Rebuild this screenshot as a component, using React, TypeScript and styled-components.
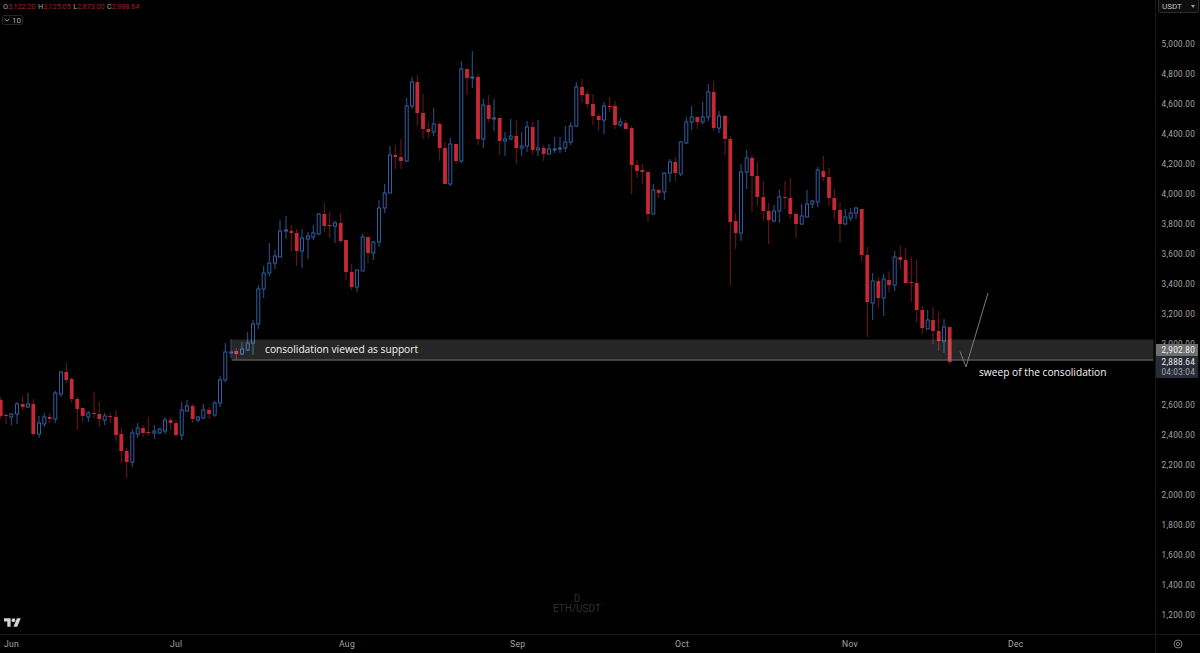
import React from 'react';
import styled, { createGlobalStyle } from 'styled-components';

// [x, high, bodyTop, bodyBottom, low, up?]  all in screen px
type Bar = [number, number, number, number, number, number];

const bars: Bar[] = [
  [0.7, 397, 400, 416, 419, 0], [6, 413, 415, 416, 424, 0], [11.3, 413, 414, 417, 425, 1], [17, 402, 404, 414, 424, 1],
  [22.7, 396, 404, 407, 410, 0], [28, 393, 404, 407, 408, 1], [33.3, 399, 404, 434, 436, 0], [39, 416, 423, 434, 438, 1],
  [44.3, 413, 417, 424, 427, 1], [49.7, 413, 417, 419, 423, 0], [55.3, 391, 393, 419, 423, 1], [61, 371, 372, 394, 397, 1],
  [66.3, 363, 372, 380, 383, 0], [71.7, 377, 379, 399, 403, 0], [77.3, 397, 399, 409, 430, 0], [82.7, 408, 408, 416, 422, 0],
  [88.3, 411, 413, 417, 422, 1], [94, 392, 413, 414, 418, 0], [99.3, 402, 414, 419, 427, 0], [104.7, 413, 416, 420, 425, 1],
  [110.3, 413, 416, 417, 423, 0], [116, 410, 417, 435, 441, 0], [121.3, 428, 434, 451, 463, 0], [126.7, 448, 451, 462, 478, 0],
  [132.3, 429, 433, 462, 467, 1], [137.7, 423, 428, 434, 438, 1], [143, 425, 428, 433, 437, 0], [148.3, 417, 432, 433, 436, 0],
  [154.3, 425, 431, 433, 439, 1], [159.7, 428, 429, 433, 434, 1], [165, 417, 420, 431, 434, 1], [170.7, 417, 420, 423, 430, 0],
  [176, 420, 423, 435, 437, 0], [181.7, 402, 410, 435, 440, 1], [187, 400, 406, 411, 412, 1], [192.7, 404, 406, 419, 423, 0],
  [198, 416, 417, 420, 422, 1], [203.3, 404, 410, 418, 419, 1], [209, 407, 410, 414, 419, 0], [214.7, 401, 403, 415, 417, 1],
  [220, 376, 380, 403, 407, 1], [225.3, 343, 352, 380, 382, 1], [231, 339, 352, 353, 358, 1], [236.3, 348, 351, 354, 360, 0],
  [242, 342, 349, 354, 355, 1], [247.7, 332, 343, 350, 351, 1], [253, 320, 324, 343, 355, 1], [258.3, 285, 289, 324, 329, 1],
  [263.7, 266, 273, 289, 298, 1], [269.3, 243, 263, 273, 276, 1], [275, 250, 256, 263, 269, 1], [280, 220, 231, 257, 257, 1],
  [286, 216, 230, 231, 239, 1], [291.3, 225, 231, 233, 252, 0], [296.7, 229, 233, 251, 266, 0], [302, 229, 238, 251, 268, 1],
  [308, 232, 236, 239, 259, 1], [313.3, 225, 233, 237, 240, 1], [318.7, 213, 214, 234, 235, 1], [324.3, 203, 214, 226, 232, 0],
  [329.7, 212, 225, 226, 238, 0], [335, 221, 223, 226, 243, 1], [340.7, 213, 223, 241, 243, 0], [346, 240, 240, 272, 280, 0],
  [351.7, 264, 272, 287, 290, 0], [357, 270, 270, 287, 292, 1], [362.7, 234, 237, 271, 271, 1], [368, 237, 237, 253, 263, 0],
  [373.3, 241, 242, 253, 260, 1], [379, 200, 208, 242, 247, 1], [384.7, 184, 193, 208, 213, 1], [390, 146, 155, 193, 193, 1],
  [395.3, 145, 155, 157, 169, 0], [401, 139, 157, 161, 169, 0], [406.7, 98, 106, 161, 162, 1], [412, 77, 82, 106, 109, 1],
  [417.3, 75, 82, 113, 126, 0], [423, 94, 113, 129, 139, 0], [428.3, 122, 129, 132, 138, 0], [433.7, 108, 124, 132, 136, 1],
  [439.7, 122, 124, 148, 161, 0], [445, 142, 148, 184, 184, 0], [450.3, 138, 144, 184, 186, 1], [456, 144, 144, 161, 164, 0],
  [461.3, 61, 69, 161, 163, 1], [467, 69, 69, 78, 95, 0], [472.3, 51, 77, 78, 88, 1], [478, 74, 77, 139, 145, 0],
  [483.3, 99, 105, 139, 148, 1], [488.7, 95, 105, 119, 122, 0], [494, 99, 118, 119, 131, 1], [499.7, 118, 118, 141, 155, 0],
  [505, 132, 139, 141, 156, 1], [510.7, 119, 136, 139, 140, 1], [516.3, 120, 136, 148, 164, 0], [521.7, 132, 146, 148, 156, 1],
  [527, 121, 127, 146, 152, 1], [532.7, 122, 127, 150, 155, 0], [538, 120, 148, 150, 156, 1], [543.7, 145, 148, 154, 161, 0],
  [549, 144, 149, 154, 154, 1], [554.7, 137, 149, 149, 153, 1], [560, 137, 148, 149, 153, 1], [565.3, 126, 142, 148, 152, 1],
  [570.7, 122, 126, 142, 145, 1], [576.3, 82, 87, 126, 127, 1], [582, 79, 87, 95, 103, 0], [587.3, 91, 94, 104, 108, 0],
  [593, 94, 104, 116, 125, 0], [598.7, 114, 116, 120, 131, 0], [604, 102, 106, 120, 134, 1], [609.7, 97, 106, 107, 112, 0],
  [615, 101, 106, 125, 129, 0], [620.3, 118, 122, 125, 127, 1], [625.7, 120, 123, 129, 129, 0], [631.7, 126, 128, 165, 194, 0],
  [637, 160, 165, 171, 178, 0], [642.3, 164, 170, 172, 184, 0], [648, 171, 172, 214, 222, 0], [653.3, 184, 190, 214, 214, 1],
  [658.7, 189, 190, 193, 198, 0], [664.3, 172, 173, 192, 200, 1], [670, 159, 162, 173, 182, 1], [675.3, 157, 162, 173, 181, 0],
  [680.7, 141, 142, 174, 176, 1], [686.3, 117, 122, 143, 144, 1], [691.7, 106, 117, 122, 130, 1], [697.3, 117, 117, 122, 129, 0],
  [702.7, 102, 117, 122, 124, 1], [708.3, 84, 92, 117, 121, 1], [713.7, 81, 92, 128, 131, 0], [719, 111, 116, 128, 133, 1],
  [725, 115, 116, 139, 155, 0], [730.3, 136, 139, 222, 285, 0], [735.7, 213, 221, 233, 249, 0], [741, 164, 172, 233, 241, 1],
  [746.7, 150, 158, 172, 189, 1], [752, 155, 158, 176, 212, 0], [757.3, 162, 176, 197, 206, 0], [763.3, 181, 197, 211, 221, 0],
  [768.7, 203, 211, 220, 244, 0], [774, 205, 211, 221, 222, 1], [779.3, 190, 197, 211, 223, 1], [785, 181, 197, 198, 209, 0],
  [790.3, 178, 198, 214, 219, 0], [796, 212, 214, 224, 238, 0], [801.7, 204, 216, 224, 225, 1], [807, 190, 204, 217, 217, 1],
  [812.3, 200, 201, 204, 208, 1], [817.7, 167, 170, 202, 207, 1], [823.3, 156, 171, 177, 181, 0], [829, 168, 177, 198, 206, 0],
  [834.3, 189, 198, 210, 219, 0], [840, 202, 210, 224, 243, 0], [845.3, 209, 217, 224, 225, 1], [850.7, 208, 213, 218, 221, 1],
  [856, 207, 208, 213, 219, 1], [861.7, 209, 209, 255, 261, 0], [867.3, 247, 255, 302, 337, 0], [872.7, 273, 281, 303, 320, 1],
  [878.3, 277, 281, 298, 308, 0], [883.7, 274, 279, 298, 316, 1], [889, 271, 280, 285, 292, 0], [894.7, 251, 257, 285, 291, 1],
  [900.3, 246, 257, 260, 269, 0], [905.7, 248, 260, 283, 283, 0], [911.3, 257, 282, 283, 302, 0], [916.7, 260, 283, 310, 322, 0],
  [922.3, 306, 310, 328, 334, 0], [927.7, 310, 320, 329, 329, 1], [933, 307, 320, 331, 344, 0], [938.7, 311, 331, 341, 351, 0],
  [944, 319, 327, 341, 353, 1], [949.7, 327, 327, 362, 364, 0],
];

// 2,800 sits behind the last price tag, so its row stays empty
const prices = [
  '5,000.00', '4,800.00', '4,600.00', '4,400.00', '4,200.00', '4,000.00', '3,800.00', '3,600.00', '3,400.00', '3,200.00',
  '3,000.00', '', '2,600.00', '2,400.00', '2,200.00', '2,000.00', '1,800.00', '1,600.00', '1,400.00', '1,200.00',
];

const months = ['Jun', 'Jul', 'Aug', 'Sep', 'Oct', 'Nov', 'Dec'];

const legend = [
  ['O', '3,122.20'],
  ['H', '3,125.05'],
  ['L', '2,873.00'],
  ['C', '2,888.64'],
];

const GlobalStyle = createGlobalStyle`
  html, body {
    margin: 0;
    height: 100%;
    background: #000;
    overflow: hidden;
  }
  #root {
    height: 100%;
  }
`;

const Layout = styled.div`
  width: 1200px;
  height: 653px;
  display: grid;
  grid-template-columns: 1155px 45px;
  grid-template-rows: 634px 19px;
  background: #000;
  font-family: Roboto, "Liberation Sans", sans-serif;
`;

const ChartPane = styled.div`
  position: relative;
  overflow: hidden;
`;

const ChartSvg = styled.svg`
  display: block;
`;

const TopLeftOverlay = styled.div`
  position: absolute;
  left: 2px;
  top: 2px;
  display: flex;
  flex-direction: column;
  align-items: flex-start;
  gap: 3px;
`;

const Legend = styled.div`
  display: flex;
  gap: 2.5px;
  padding-left: 1px;
  font-size: 7.2px;
  line-height: 10px;
`;

const LegendItem = styled.span`
  color: #a8a8a8;
`;

const LegendValue = styled.span`
  color: #a0212a;
`;

const IndicatorChip = styled.div`
  width: 21px;
  height: 10px;
  box-sizing: border-box;
  border: 1px solid #242424;
  border-radius: 2px;
  display: flex;
  align-items: center;
  justify-content: center;
  gap: 2px;
  color: #b0b0b0;
  font-size: 8px;
`;

const Note = styled.span<{ $x: number; $y: number }>`
  position: absolute;
  left: ${(p) => p.$x}px;
  top: ${(p) => p.$y}px;
  color: #f4f4f4;
  font-family: "Open Sans", sans-serif;
  font-size: 10.2px;
  font-weight: 500;
  line-height: 14px;
  white-space: nowrap;
`;

const Watermark = styled.div`
  position: absolute;
  left: 553px;
  top: 594px;
  width: 48px;
  text-align: center;
  color: #303030;
  font-size: 10px;
  line-height: 10px;
  white-space: nowrap;
`;

const Logo = styled.svg`
  position: absolute;
  left: 4px;
  top: 618px;
`;

const PriceAxis = styled.div`
  position: relative;
  border-left: 1px solid #171717;
  padding: 29px 5px 0 0;
  display: flex;
  flex-direction: column;
  align-items: flex-end;
`;

const PriceRow = styled.div`
  height: 30.05px;
  flex-shrink: 0;
  display: flex;
  align-items: center;
  color: #a6a6a6;
  font-size: 8.2px;
  letter-spacing: 0.25px;
`;

const CurrencyButton = styled.div`
  position: absolute;
  left: 2px;
  top: -1px;
  width: 41px;
  height: 14px;
  box-sizing: border-box;
  padding: 0 3px;
  border: 1px solid #2b2b2b;
  border-radius: 2px;
  background: #0d0d0d;
  display: flex;
  align-items: center;
  justify-content: space-between;
  color: #c0c0c0;
  font-size: 8px;
`;

const TagStack = styled.div`
  position: absolute;
  left: 0;
  top: 344px;
  width: 42px;
  display: flex;
  flex-direction: column;
  font-size: 8.2px;
  letter-spacing: 0.25px;
  white-space: nowrap;
`;

const PriceTag = styled.div`
  height: 12px;
  padding-right: 3px;
  background: #6f6f6f;
  color: #f2f2f2;
  display: flex;
  align-items: center;
  justify-content: flex-end;
`;

const LastPriceTag = styled.div`
  height: 22px;
  padding-right: 3px;
  background: #282c38;
  display: flex;
  flex-direction: column;
  align-items: flex-end;
  justify-content: center;
  line-height: 10.5px;
  color: #ececec;
`;

const Countdown = styled.span`
  color: #a4a6ac;
`;

const TimeAxis = styled.div`
  border-top: 1px solid #171717;
  padding-left: 4px;
  display: grid;
  grid-template-columns: 166px 169px 171px 165px 167px 166px 1fr;
  align-items: center;
  color: #a6a6a6;
  font-size: 8.6px;
  letter-spacing: 0.3px;
`;

const AxisCorner = styled.div`
  border-top: 1px solid #171717;
  border-left: 1px solid #171717;
  display: flex;
  align-items: center;
  justify-content: center;
`;

const Candle = ({ bar }: { bar: Bar }) => {
  const [x, high, top, bottom, low, up] = bar;
  if (up) {
    return (
      <g stroke="#2f5fa3">
        <line x1={x} x2={x} y1={high} y2={top} stroke="#2c5894" />
        <line x1={x} x2={x} y1={bottom} y2={low} stroke="#2c5894" />
        <rect x={x - 1.5} y={top} width={3} height={Math.max(bottom - top, 1)} fill="#000" />
      </g>
    );
  }
  return (
    <g>
      <line x1={x} x2={x} y1={high} y2={low} stroke="#74181f" />
      <rect x={x - 1.9} y={top} width={3.8} height={Math.max(bottom - top, 1)} fill="#c52a34" />
    </g>
  );
};

export default function App() {
  return (
    <>
      <GlobalStyle />
      <Layout>
        <ChartPane>
          <ChartSvg width={1155} height={634} viewBox="0 0 1155 634">
            {bars.map((bar) => (
              <Candle key={bar[0]} bar={bar} />
            ))}
            <rect x={231.5} y={339.5} width={922} height={20} fill="rgba(255,255,255,0.15)" />
            <line x1={231.5} x2={1153.5} y1={360} y2={360} stroke="#7e7e7e" />
            <polyline points="960,351.5 966,367 988,293" fill="none" stroke="#7c7c7c" />
          </ChartSvg>
          <TopLeftOverlay>
            <Legend>
              {legend.map(([label, value]) => (
                <LegendItem key={label}>
                  {label}
                  <LegendValue>{value}</LegendValue>
                </LegendItem>
              ))}
            </Legend>
            <IndicatorChip>
              <svg width="6" height="4" viewBox="0 0 6 4">
                <path d="M0.5 0.8 3 3.2 5.5 0.8" fill="none" stroke="#a8a8a8" />
              </svg>
              10
            </IndicatorChip>
          </TopLeftOverlay>
          <Note $x={265} $y={342}>consolidation viewed as support</Note>
          <Note $x={979} $y={365}>sweep of the consolidation</Note>
          <Watermark>
            D
            <br />
            ETH/USDT
          </Watermark>
          <Logo width="17" height="9" viewBox="0 4 36 18">
            <path d="M14 22H7V11H0V4h14v18zM28 22h-8l7.5-18h8L28 22z" fill="#d4d4d4" />
            <circle cx="20" cy="8" r="4" fill="#d4d4d4" />
          </Logo>
        </ChartPane>
        <PriceAxis>
          <CurrencyButton>
            USDT
            <svg width="4" height="3" viewBox="0 0 4 3">
              <path d="M0 0h4L2 3z" fill="#9a9a9a" />
            </svg>
          </CurrencyButton>
          {prices.map((price, i) => (
            <PriceRow key={i}>{price}</PriceRow>
          ))}
          <TagStack>
            <PriceTag>2,902.80</PriceTag>
            <LastPriceTag>
              2,888.64
              <Countdown>04:03:04</Countdown>
            </LastPriceTag>
          </TagStack>
        </PriceAxis>
        <TimeAxis>
          {months.map((month) => (
            <span key={month}>{month}</span>
          ))}
        </TimeAxis>
        <AxisCorner>
          <svg width="10" height="10" viewBox="0 0 10 10">
            <circle cx="5" cy="5" r="4" fill="none" stroke="#8c8c8c" strokeWidth="0.9" />
            <circle cx="5" cy="5" r="1.6" fill="none" stroke="#8c8c8c" strokeWidth="0.9" />
          </svg>
        </AxisCorner>
      </Layout>
    </>
  );
}
